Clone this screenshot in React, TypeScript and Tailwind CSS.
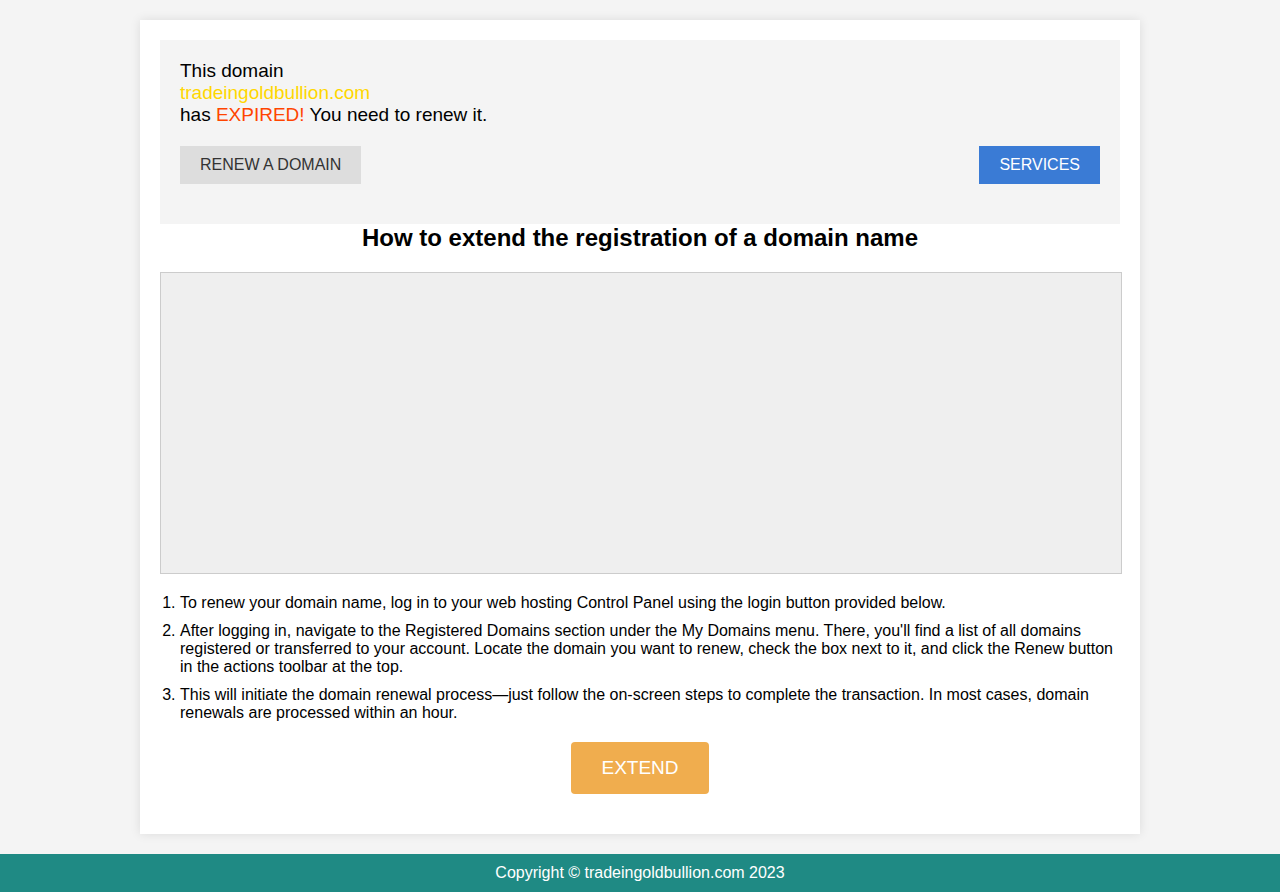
import React from 'react';

const steps = [
  'To renew your domain name, log in to your web hosting Control Panel using the login button provided below.',
  "After logging in, navigate to the Registered Domains section under the My Domains menu. There, you'll find a list of all domains registered or transferred to your account. Locate the domain you want to renew, check the box next to it, and click the Renew button in the actions toolbar at the top.",
  'This will initiate the domain renewal process—just follow the on-screen steps to complete the transaction. In most cases, domain renewals are processed within an hour.',
];

const App: React.FC = () => {
  return (
    <div className="min-h-screen bg-[#f4f4f4] flex flex-col font-['Liberation_Sans',Arial,sans-serif] text-black">
      <div className="w-[1000px] mx-auto mt-5 mb-5 bg-white p-5 shadow-[0_0_10px_rgba(0,0,0,0.1)]">
        <div className="bg-[#f4f4f4] p-5">
          <p className="text-[19px] leading-[22px]">
            This domain
            <br />
            <span className="text-[#ffd700]">tradeingoldbullion.com</span>
            <br />
            has <span className="text-[#ff4500]">EXPIRED!</span> You need to renew it.
          </p>
          <div className="flex justify-between mt-5 mb-5">
            <button className="bg-[#dddddd] text-[#333] text-[16px] h-[38px] px-5">RENEW A DOMAIN</button>
            <button className="bg-[#3a7bd5] text-white text-[16px] h-[38px] px-5">SERVICES</button>
          </div>
        </div>

        <h2 className="text-center font-bold text-[24px] leading-[28px]">
          How to extend the registration of a domain name
        </h2>

        <div className="mt-5 h-[302px] w-[962px] bg-[#efefef] border border-[#cccccc]" />

        <ol className="list-decimal pl-5 mt-5 text-[16px] leading-[18px]">
          {steps.map((s, i) => (
            <li key={i} className="mb-[10px] last:mb-0">{s}</li>
          ))}
        </ol>

        <div className="flex justify-center mt-5 mb-5">
          <button className="bg-[#f0ad4e] text-white text-[19px] w-[138px] h-[52px] rounded">EXTEND</button>
        </div>
      </div>

      <footer className="mt-auto bg-[#1f8a84] text-white text-center text-[16px] h-[38px] flex items-center justify-center">
        Copyright © tradeingoldbullion.com 2023
      </footer>
    </div>
  );
};

export default App;
